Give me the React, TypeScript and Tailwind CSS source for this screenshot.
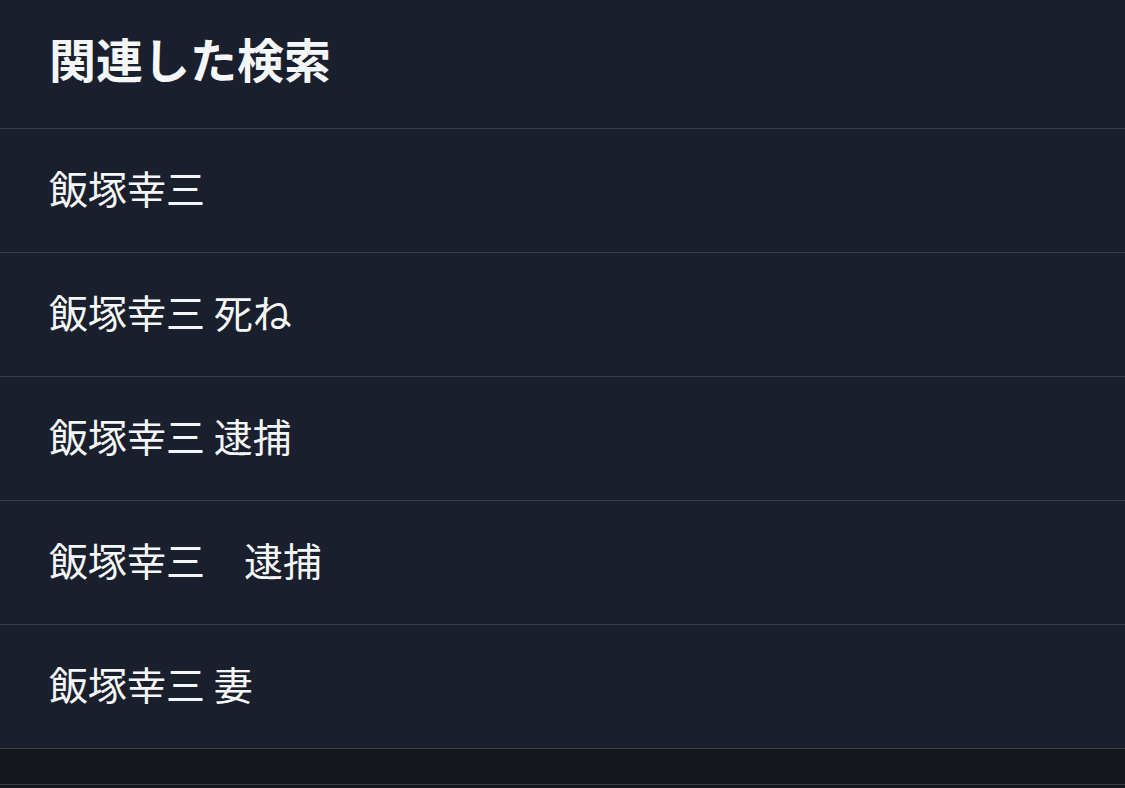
import React from "react"

const related = [
  "飯塚幸三",
  "飯塚幸三 死ね",
  "飯塚幸三 逮捕",
  "飯塚幸三　逮捕",
  "飯塚幸三 妻",
]

const App = () => {
  return (
    <div
      className="w-[1125px] h-[788px] overflow-hidden bg-[#14171e] text-[#f5f6f7]"
      style={{ fontFamily: '"Noto Sans CJK JP", "Noto Sans", sans-serif' }}
    >
      <div className="bg-[#191f2c]">
        <div className="h-[129px] flex items-center px-[49px] pb-[14px] border-b border-[#3a3e47]">
          <h2 className="text-[47px] font-bold leading-none">関連した検索</h2>
        </div>
        {related.map((item) => (
          <div
            key={item}
            className="h-[124px] flex items-center px-[49px] pb-[6px] border-b border-[#3a3e47]"
          >
            <span className="text-[39px] leading-none">{item}</span>
          </div>
        ))}
      </div>
      <div className="h-[36px] border-b border-[#3a3e47]" />
    </div>
  )
}

export default App
